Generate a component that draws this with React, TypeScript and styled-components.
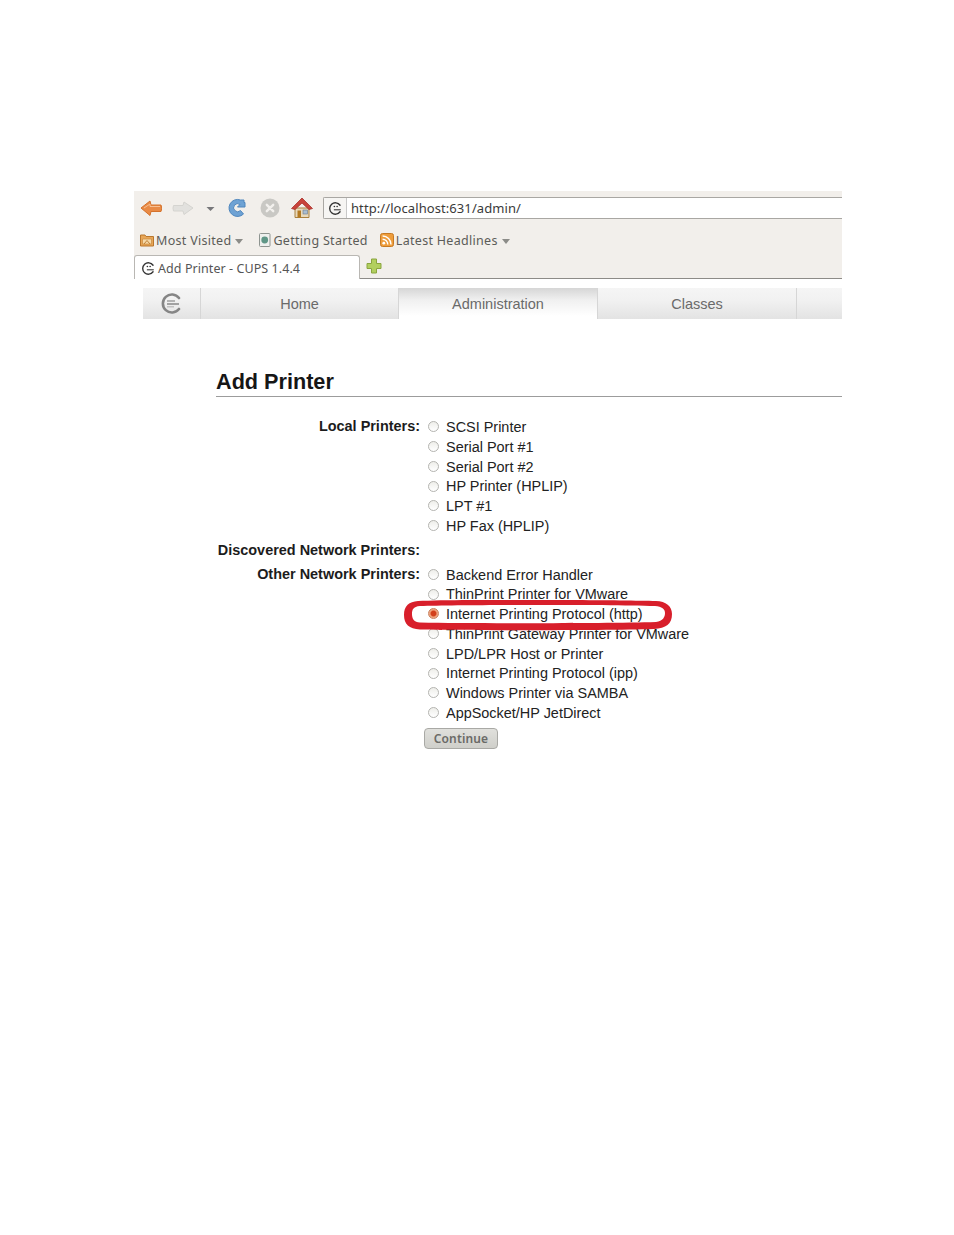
import React from "react";
import styled, { createGlobalStyle } from "styled-components";

const Global = createGlobalStyle`
  html, body { margin: 0; padding: 0; background: #fff; }
  body { font-family: "Liberation Sans", Arial, sans-serif; }
`;

const Page = styled.div`
  position: relative;
  width: 954px;
  height: 1235px;
  padding: 191px 0 0 134px;
  box-sizing: border-box;
  overflow: hidden;
`;

const Shot = styled.div`
  width: 708px;
`;

const Toolbar = styled.div`
  height: 28px;
  background: #f2efeb;
  display: flex;
  align-items: flex-start;
  padding-top: 6px;
  box-sizing: border-box;
`;

const ToolIcon = styled.span<{ $w: number; $ml: number }>`
  display: block;
  width: ${(p) => p.$w}px;
  height: 22px;
  margin-left: ${(p) => p.$ml}px;
  flex: none;
`;

const UrlBar = styled.div`
  flex: 1;
  height: 22px;
  margin-left: 10px;
  background: #fff;
  border: 1px solid #a9a7a3;
  border-right: none;
  border-radius: 2px 0 0 2px;
  box-sizing: border-box;
  display: flex;
  align-items: center;
`;

const UrlIconBox = styled.span`
  width: 23px;
  height: 20px;
  display: flex;
  align-items: center;
  justify-content: center;
  border-right: 1px solid #c8c8c8;
  box-sizing: border-box;
  background: #f6f5f3;
`;

const UrlText = styled.span`
  margin-left: 4px;
  font: 13px/20px "Noto Sans", sans-serif;
  letter-spacing: 0.08px;
  color: #3a3a3a;
`;

const Bookmarks = styled.div`
  height: 36px;
  background: #f2efeb;
  display: flex;
  align-items: center;
  padding: 6px 0 0 6px;
  box-sizing: border-box;
  font: 12.5px "Noto Sans", sans-serif;
  color: #5c5c58;
`;

const Bookmark = styled.span<{ $ml?: number }>`
  display: flex;
  align-items: center;
  gap: 2px;
  margin-left: ${(p) => p.$ml ?? 0}px;
  white-space: nowrap;
  letter-spacing: 0.3px;
`;

const Caret = styled.i`
  display: inline-block;
  width: 0;
  height: 0;
  margin: 2px 0 0 2px;
  border-left: 4px solid transparent;
  border-right: 4px solid transparent;
  border-top: 5px solid #8c8c88;
`;

const TabStrip = styled.div`
  height: 24px;
  background: #f2efeb;
  border-bottom: 1px solid #8d8b87;
  box-sizing: border-box;
  display: flex;
  align-items: flex-start;
`;

const BrowserTab = styled.div`
  width: 226px;
  height: 24px;
  background: #fff;
  border: 1px solid #b9b7b3;
  border-bottom: none;
  border-radius: 3px 3px 0 0;
  box-sizing: border-box;
  display: flex;
  align-items: center;
  padding: 2px 0 0 7px;
  gap: 3px;
  font: 12.5px "Noto Sans", sans-serif;
  letter-spacing: 0.07px;
  color: #555;
`;

const PlusBox = styled.span`
  margin: 3px 0 0 6px;
  display: block;
  width: 16px;
  height: 16px;
`;

const Nav = styled.nav`
  margin: 9px 0 0 9px;
  height: 31px;
  display: flex;
  overflow: hidden;
  font: 14.5px "Liberation Sans", sans-serif;
`;

const NavTab = styled.div<{ $w: number; $active?: boolean }>`
  width: ${(p) => p.$w}px;
  flex: none;
  height: 31px;
  box-sizing: border-box;
  display: flex;
  align-items: center;
  justify-content: center;
  color: #6a6a6a;
  border-right: 1px solid #d6d6d6;
  background: ${(p) =>
    p.$active
      ? "linear-gradient(#d6d6d6 0, #f0f0f0 12px, #fff 28px)"
      : "linear-gradient(#f5f5f5, #f1f1f1 40%, #e3e3e3)"};
`;

const Content = styled.main`
  margin: 49px 0 0 82px;
`;

const Title = styled.h1`
  margin: 0;
  height: 28px;
  font: bold 21.65px/28px "Liberation Sans", sans-serif;
  color: #161616;
  border-bottom: 1px solid #9c9c9c;
`;

const Form = styled.div`
  margin-top: 21px;
  display: grid;
  grid-template-columns: 204px 1fr;
  column-gap: 8px;
  font-size: 14.45px;
  line-height: 19.75px;
  color: #222;
`;

const Label = styled.div`
  text-align: right;
  font-weight: bold;
  color: #1c1c1c;
  margin-top: -1px;
  white-space: nowrap;
`;

const Options = styled.div<{ $mb?: number }>`
  display: flex;
  flex-direction: column;
  margin-bottom: ${(p) => p.$mb ?? 0}px;
`;

const Option = styled.label`
  display: flex;
  align-items: center;
  height: 19.75px;
  white-space: nowrap;
`;

const Radio = styled.span<{ $checked?: boolean }>`
  display: block;
  box-sizing: border-box;
  width: 11px;
  height: 11px;
  margin: -2px 7px 0 0;
  border-radius: 50%;
  flex: none;
  border: 1px solid ${(p) => (p.$checked ? "#c9825f" : "#b4b4b0")};
  background: ${(p) =>
    p.$checked
      ? "radial-gradient(circle, #d2401c 0, #d2401c 2.4px, #f0a27c 3.5px, #e9b094 6px)"
      : "linear-gradient(#eeeeea, #fff)"};
`;

const Continue = styled.button`
  display: block;
  width: 74px;
  height: 21px;
  margin: 4px 0 0 -4px;
  padding: 0;
  border: 1px solid #a9a9a5;
  border-radius: 4px;
  background: linear-gradient(#e0e0dc, #cfcfca);
  color: #6a6a67;
  font: 600 12px "Noto Sans", sans-serif;
  letter-spacing: 0.15px;
`;

const Circle = styled.svg`
  position: absolute;
  left: 404px;
  top: 600px;
  pointer-events: none;
`;

const Back = () => (
  <svg width="22" height="22" viewBox="0 0 22 22">
    <path d="M1 11 L10 4 L11 8 L21 8 Q22.5 11 21 14.5 L11 14.5 L10 18.5 Z" fill="#e98a45" stroke="#d4722c" strokeWidth="1" strokeLinejoin="round" />
    <path d="M4 11 L10 7 V9.5 H20" fill="none" stroke="#f7bf92" strokeWidth="1" />
  </svg>
);
const Forward = () => (
  <svg width="22" height="22" viewBox="0 0 22 22">
    <path d="M21 11 L12 5 L11 8.5 L1.5 8.5 Q0.5 11 1.5 14 L11 14 L12 17.5 Z" fill="#e2e1de" stroke="#d5d4d0" strokeWidth="1" strokeLinejoin="round" />
  </svg>
);
const DropTri = () => (
  <svg width="9" height="22" viewBox="0 0 9 22">
    <path d="M0.5 10 H8.5 L4.5 14 Z" fill="#77777a" />
  </svg>
);
const Reload = () => (
  <svg width="20" height="22" viewBox="0 0 20 22">
    <path d="M17 5.5 V3 L13.5 3 A8.5 8.5 0 1 0 16.5 17 L13.5 13.5 A4 4 0 1 1 13 7.5 L10.5 10 H18 V5.5 Z" fill="#6ea2d4" stroke="#4f86bd" strokeWidth="1" strokeLinejoin="round" />
  </svg>
);
const Stop = () => (
  <svg width="20" height="22" viewBox="0 0 20 22">
    <circle cx="10" cy="11" r="9.5" fill="#c9c8c4" />
    <path d="M6.8 7.8 L13.2 14.2 M13.2 7.8 L6.8 14.2" stroke="#f2f0ed" strokeWidth="2.4" strokeLinecap="round" />
  </svg>
);
const Home = () => (
  <svg width="22" height="22" viewBox="0 0 22 22">
    <path d="M4 11 V20.5 H18 V11 Z" fill="#e8d9bb" stroke="#a9803f" strokeWidth="1" />
    <rect x="6.5" y="13.5" width="3.5" height="7" fill="#b47a22" />
    <rect x="12" y="13" width="4.5" height="4" fill="#a9bdd0" stroke="#6d7a88" strokeWidth="0.6" />
    <path d="M0.5 11.500 L11 1 L21.5 11.500 L18 12.500 L11 6 L4 12.500 Z" fill="#c8433b" stroke="#a93029" strokeWidth="0.8" strokeLinejoin="round" />
  </svg>
);
const CupsLogo = () => (
  <svg width="13" height="13" viewBox="0 0 16 16" style={{ flex: "none" }}>
    <path d="M13.6 4 A7 7 0 1 0 13.6 12" fill="none" stroke="#333" strokeWidth="1.7" strokeLinecap="round" />
    <path d="M6 9.600 H14.500" stroke="#333" strokeWidth="1.3" />
    <circle cx="6.600" cy="5.600" r="1" fill="#333" />
    <circle cx="10" cy="5.600" r="1" fill="#333" />
  </svg>
);
const NavLogo = () => (
  <svg width="21" height="21" viewBox="0 0 21 21">
    <path d="M18 5 A9 9 0 1 0 18 16" fill="none" stroke="#858585" strokeWidth="2.6" strokeLinecap="round" />
    <rect x="6" y="7" width="8" height="2" fill="#b4b4b4" />
    <rect x="6" y="10" width="12" height="2" fill="#a2a2a2" />
    <rect x="6" y="13" width="7" height="1.500" fill="#c2c2c2" />
  </svg>
);
const Folder = () => (
  <svg width="14" height="14" viewBox="0 0 14 14" style={{ flex: "none" }}>
    <path d="M0.5 2 H5 L6 3.500 H13.500 V13 H0.5 Z" fill="#e8a657" stroke="#b9772d" />
    <path d="M2.500 6 H11.500 V11 H2.500 Z" fill="#f6d9a8" stroke="#c98a3f" strokeWidth="0.7" />
    <path d="M4 11 L7 7.500 L10 11" fill="none" stroke="#b9772d" strokeWidth="0.9" />
  </svg>
);
const DocIcon = () => (
  <svg width="13" height="14" viewBox="0 0 13 14" style={{ flex: "none" }}>
    <rect x="1.500" y="0.5" width="10.500" height="13" rx="1" fill="#eef0ee" stroke="#8e9490" />
    <circle cx="6.700" cy="7" r="3.400" fill="#5f9686" />
  </svg>
);
const Rss = () => (
  <svg width="14" height="14" viewBox="0 0 14 14" style={{ flex: "none" }}>
    <rect x="0.5" y="0.5" width="13" height="13" rx="2" fill="#ee9d3c" stroke="#c77a23" />
    <circle cx="3.800" cy="10.200" r="1.400" fill="#fff" />
    <path d="M2.600 6.200 A5.200 5.200 0 0 1 7.800 11.400 M2.600 3 A8.400 8.400 0 0 1 11 11.400" fill="none" stroke="#fff" strokeWidth="1.400" />
  </svg>
);
const Plus = () => (
  <svg width="16" height="16" viewBox="0 0 16 16">
    <path d="M5.500 1 H10.500 V5.500 H15 V10.500 H10.500 V15 H5.500 V10.500 H1 V5.500 H5.500 Z" fill="#b2cf5f" stroke="#8aa53f" strokeWidth="1" strokeLinejoin="round" />
  </svg>
);

const local = ["SCSI Printer", "Serial Port #1", "Serial Port #2", "HP Printer (HPLIP)", "LPT #1", "HP Fax (HPLIP)"];
const other = [
  "Backend Error Handler",
  "ThinPrint Printer for VMware",
  "Internet Printing Protocol (http)",
  "ThinPrint Gateway Printer for VMware",
  "LPD/LPR Host or Printer",
  "Internet Printing Protocol (ipp)",
  "Windows Printer via SAMBA",
  "AppSocket/HP JetDirect",
];

export default function App() {
  return (
    <Page>
      <Global />
      <Shot>
        <Toolbar>
          <ToolIcon $w={22} $ml={6}><Back /></ToolIcon>
          <ToolIcon $w={22} $ml={10}><Forward /></ToolIcon>
          <ToolIcon $w={9} $ml={12}><DropTri /></ToolIcon>
          <ToolIcon $w={20} $ml={12}><Reload /></ToolIcon>
          <ToolIcon $w={20} $ml={13}><Stop /></ToolIcon>
          <ToolIcon $w={22} $ml={11}><Home /></ToolIcon>
          <UrlBar>
            <UrlIconBox><CupsLogo /></UrlIconBox>
            <UrlText>http://localhost:631/admin/</UrlText>
          </UrlBar>
        </Toolbar>
        <Bookmarks>
          <Bookmark><Folder />Most Visited<Caret /></Bookmark>
          <Bookmark $ml={15}><DocIcon />Getting Started</Bookmark>
          <Bookmark $ml={12}><Rss />Latest Headlines<Caret /></Bookmark>
        </Bookmarks>
        <TabStrip>
          <BrowserTab><CupsLogo />Add Printer - CUPS 1.4.4</BrowserTab>
          <PlusBox><Plus /></PlusBox>
        </TabStrip>
        <Nav>
          <NavTab $w={58}><NavLogo /></NavTab>
          <NavTab $w={198}>Home</NavTab>
          <NavTab $w={199} $active>Administration</NavTab>
          <NavTab $w={199}>Classes</NavTab>
          <NavTab $w={60} />
        </Nav>
        <Content>
          <Title>Add Printer</Title>
          <Form>
            <Label>Local Printers:</Label>
            <Options $mb={5}>
              {local.map((t) => (
                <Option key={t}><Radio />{t}</Option>
              ))}
            </Options>
            <Label>Discovered Network Printers:</Label>
            <Options $mb={24} />
            <Label>Other Network Printers:</Label>
            <Options>
              {other.map((t) => (
                <Option key={t}><Radio $checked={t.endsWith("(http)")} />{t}</Option>
              ))}
              <Continue type="button">Continue</Continue>
            </Options>
          </Form>
        </Content>
      </Shot>
      <Circle width="268" height="31" viewBox="0 0 268 31">
        <path
          fillRule="evenodd"
          fill="#d81f2b"
          d="M14 1 C60 -1 210 0 252 1 C262 1.500 268 6 268 14 C268 24 262 28 250 29 C200 30.500 70 30.500 16 29.500 C5 29 0 24 0 15 C0 6 5 1.500 14 1 Z M16 6 C9 6.500 8 10 8 14 C8 19 10 22 16 22.500 C70 23.500 200 23.500 252 22 C259 21 261 17 261 13 C261 9 258 6.500 251 6 C200 4.500 60 4.500 16 6 Z"
        />
      </Circle>
    </Page>
  );
}
